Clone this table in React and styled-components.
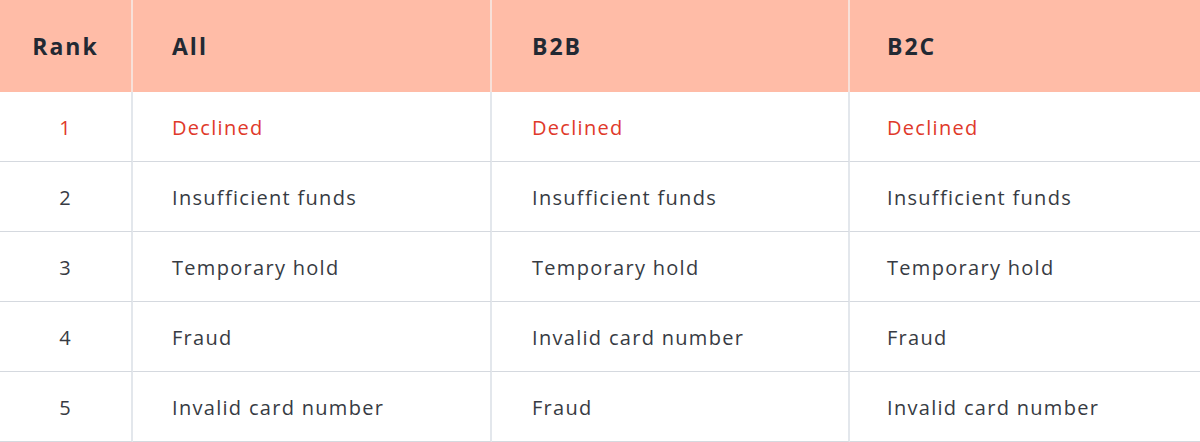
import React from 'react';
import styled, { createGlobalStyle } from 'styled-components';

const GlobalStyle = createGlobalStyle`
  html, body {
    margin: 0;
    padding: 0;
    background: #fff;
  }
`

const Table = styled.div`
  display: grid;
  grid-template-columns: 133px 359px 358px 1fr;
  width: 1200px;
  font-family: 'Open Sans', 'Lato', sans-serif;
`
const HeadCell = styled.div`
  height: 92px;
  display: flex;
  align-items: center;
  justify-content: ${props => props.center ? 'center' : 'flex-start'};
  padding-left: ${props => props.pad || 0}px;
  background: #ffbca7;
  border-right: ${props => props.last ? 'none' : '2px solid #f8e0d8'};
  box-sizing: border-box;
  font-size: 23px;
  font-weight: 700;
  letter-spacing: 2px;
  color: #222933;
`
const Cell = styled.div`
  height: 70px;
  display: flex;
  align-items: center;
  justify-content: ${props => props.center ? 'center' : 'flex-start'};
  padding-left: ${props => props.pad || 0}px;
  padding-top: 2px;
  border-right: ${props => props.last ? 'none' : '2px solid #e3e7ec'};
  border-bottom: 1px solid #d5d9df;
  box-sizing: border-box;
  font-size: 20px;
  letter-spacing: 1.3px;
  color: ${props => props.top ? '#e0392a' : '#373b43'};
`

const pads = [0, 39, 40, 37];

const rows = [
  ['1', 'Declined', 'Declined', 'Declined'],
  ['2', 'Insufficient funds', 'Insufficient funds', 'Insufficient funds'],
  ['3', 'Temporary hold', 'Temporary hold', 'Temporary hold'],
  ['4', 'Fraud', 'Invalid card number', 'Fraud'],
  ['5', 'Invalid card number', 'Fraud', 'Invalid card number'],
];

export default function App() {
  return (
    <>
      <GlobalStyle />
      <Table>
        {['Rank', 'All', 'B2B', 'B2C'].map((text, j) => (
          <HeadCell key={text} center={j === 0} last={j === 3} pad={pads[j]}>{text}</HeadCell>
        ))}
        {rows.map((row, i) => row.map((text, j) => (
          <Cell key={`${i}-${j}`} center={j === 0} last={j === 3} pad={pads[j]} top={i === 0}>
            {text}
          </Cell>
        )))}
      </Table>
    </>
  );
}
